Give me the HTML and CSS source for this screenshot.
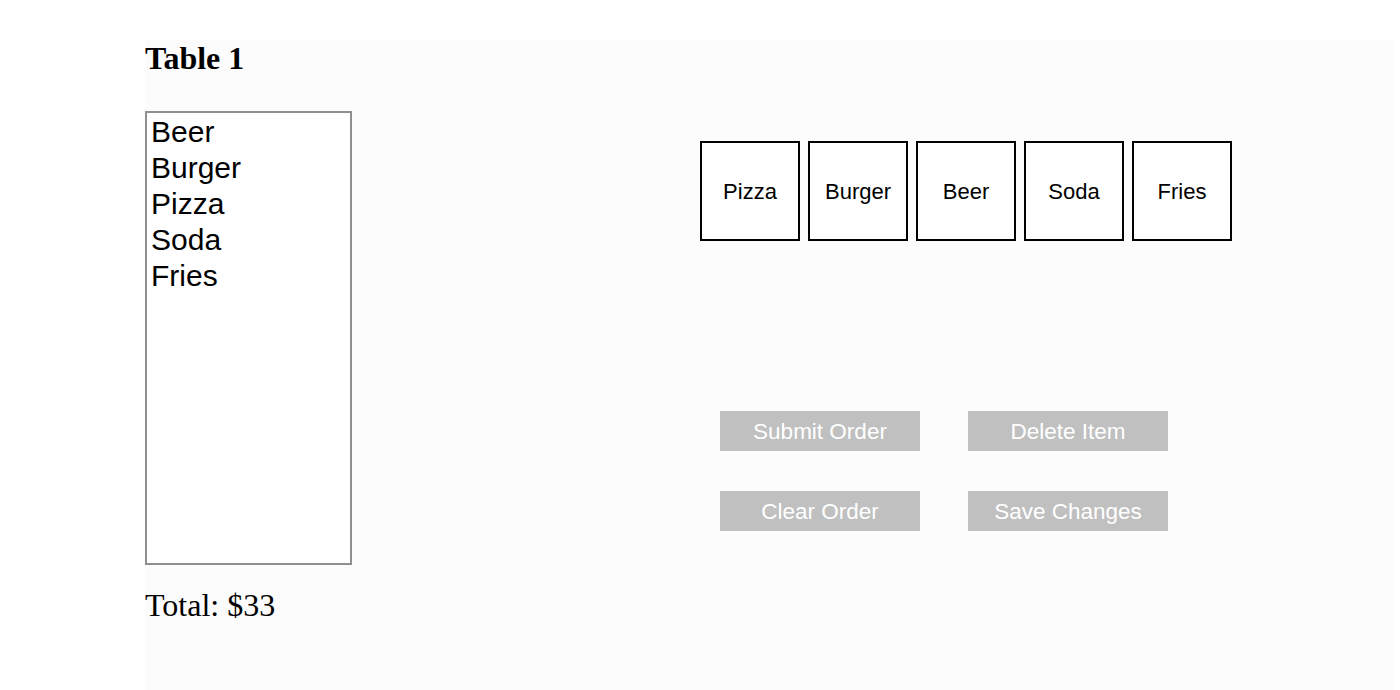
FILE: index.html
```html
<!DOCTYPE html>
<html>
<head>
<meta charset="utf-8">
<link rel="stylesheet" href="styles.css">
</head>
<body>
<div class="panel">
  <h1 class="title">Table 1</h1>
  <div class="layout">
    <div class="order-col">
      <div class="order-list">
        <div class="order-item">Beer</div>
        <div class="order-item">Burger</div>
        <div class="order-item">Pizza</div>
        <div class="order-item">Soda</div>
        <div class="order-item">Fries</div>
      </div>
      <div class="total">Total: $33</div>
    </div>
    <div class="controls">
      <div class="menu">
        <button class="menu-item">Pizza</button>
        <button class="menu-item">Burger</button>
        <button class="menu-item">Beer</button>
        <button class="menu-item">Soda</button>
        <button class="menu-item">Fries</button>
      </div>
      <div class="actions">
        <button class="action">Submit Order</button>
        <button class="action">Delete Item</button>
        <button class="action">Clear Order</button>
        <button class="action">Save Changes</button>
      </div>
    </div>
  </div>
</div>
</body>
</html>
```
FILE: styles.css
```css
html, body {
  margin: 0;
  padding: 0;
  background: #ffffff;
  height: 100%;
}
body {
  font-family: "Liberation Serif", "Times New Roman", serif;
  overflow: hidden;
}
.panel {
  margin: 40px 7px 0 145px;
  background: #fcfcfc;
  min-height: 650px;
}
.title {
  margin: 0;
  padding-top: 1px;
  font-size: 32px;
  font-weight: bold;
  line-height: 34px;
  color: #000;
}
.layout {
  display: flex;
  margin-top: 36px;
}
.order-col {
  width: 207px;
  display: flex;
  flex-direction: column;
}
.order-list {
  box-sizing: border-box;
  width: 207px;
  height: 454px;
  border: 2px solid #8f8f8f;
  background: #ffffff;
  padding: 1px 4px;
  font-family: "Liberation Sans", Arial, sans-serif;
  font-size: 30px;
  line-height: 36px;
  color: #000;
}
.total {
  margin-top: 23px;
  font-size: 32px;
  line-height: 34px;
  color: #000;
}
.controls {
  margin-left: 348px;
  padding-top: 30px;
  display: flex;
  flex-direction: column;
}
.menu {
  display: flex;
  gap: 8px;
}
.menu-item {
  box-sizing: border-box;
  width: 100px;
  height: 100px;
  border: 2px solid #000;
  background: #fff;
  margin: 0;
  padding: 2px 0 0;
  font-family: "Liberation Sans", Arial, sans-serif;
  font-size: 22px;
  color: #000;
}
.actions {
  display: grid;
  grid-template-columns: 200px 200px;
  column-gap: 48px;
  row-gap: 40px;
  margin-top: 170px;
  margin-left: 20px;
}
.action {
  box-sizing: border-box;
  width: 200px;
  height: 40px;
  border: none;
  margin: 0;
  padding: 2px 0 0;
  background: #c0c0c0;
  color: #ffffff;
  font-family: "Liberation Sans", Arial, sans-serif;
  font-size: 22.5px;
}
```
